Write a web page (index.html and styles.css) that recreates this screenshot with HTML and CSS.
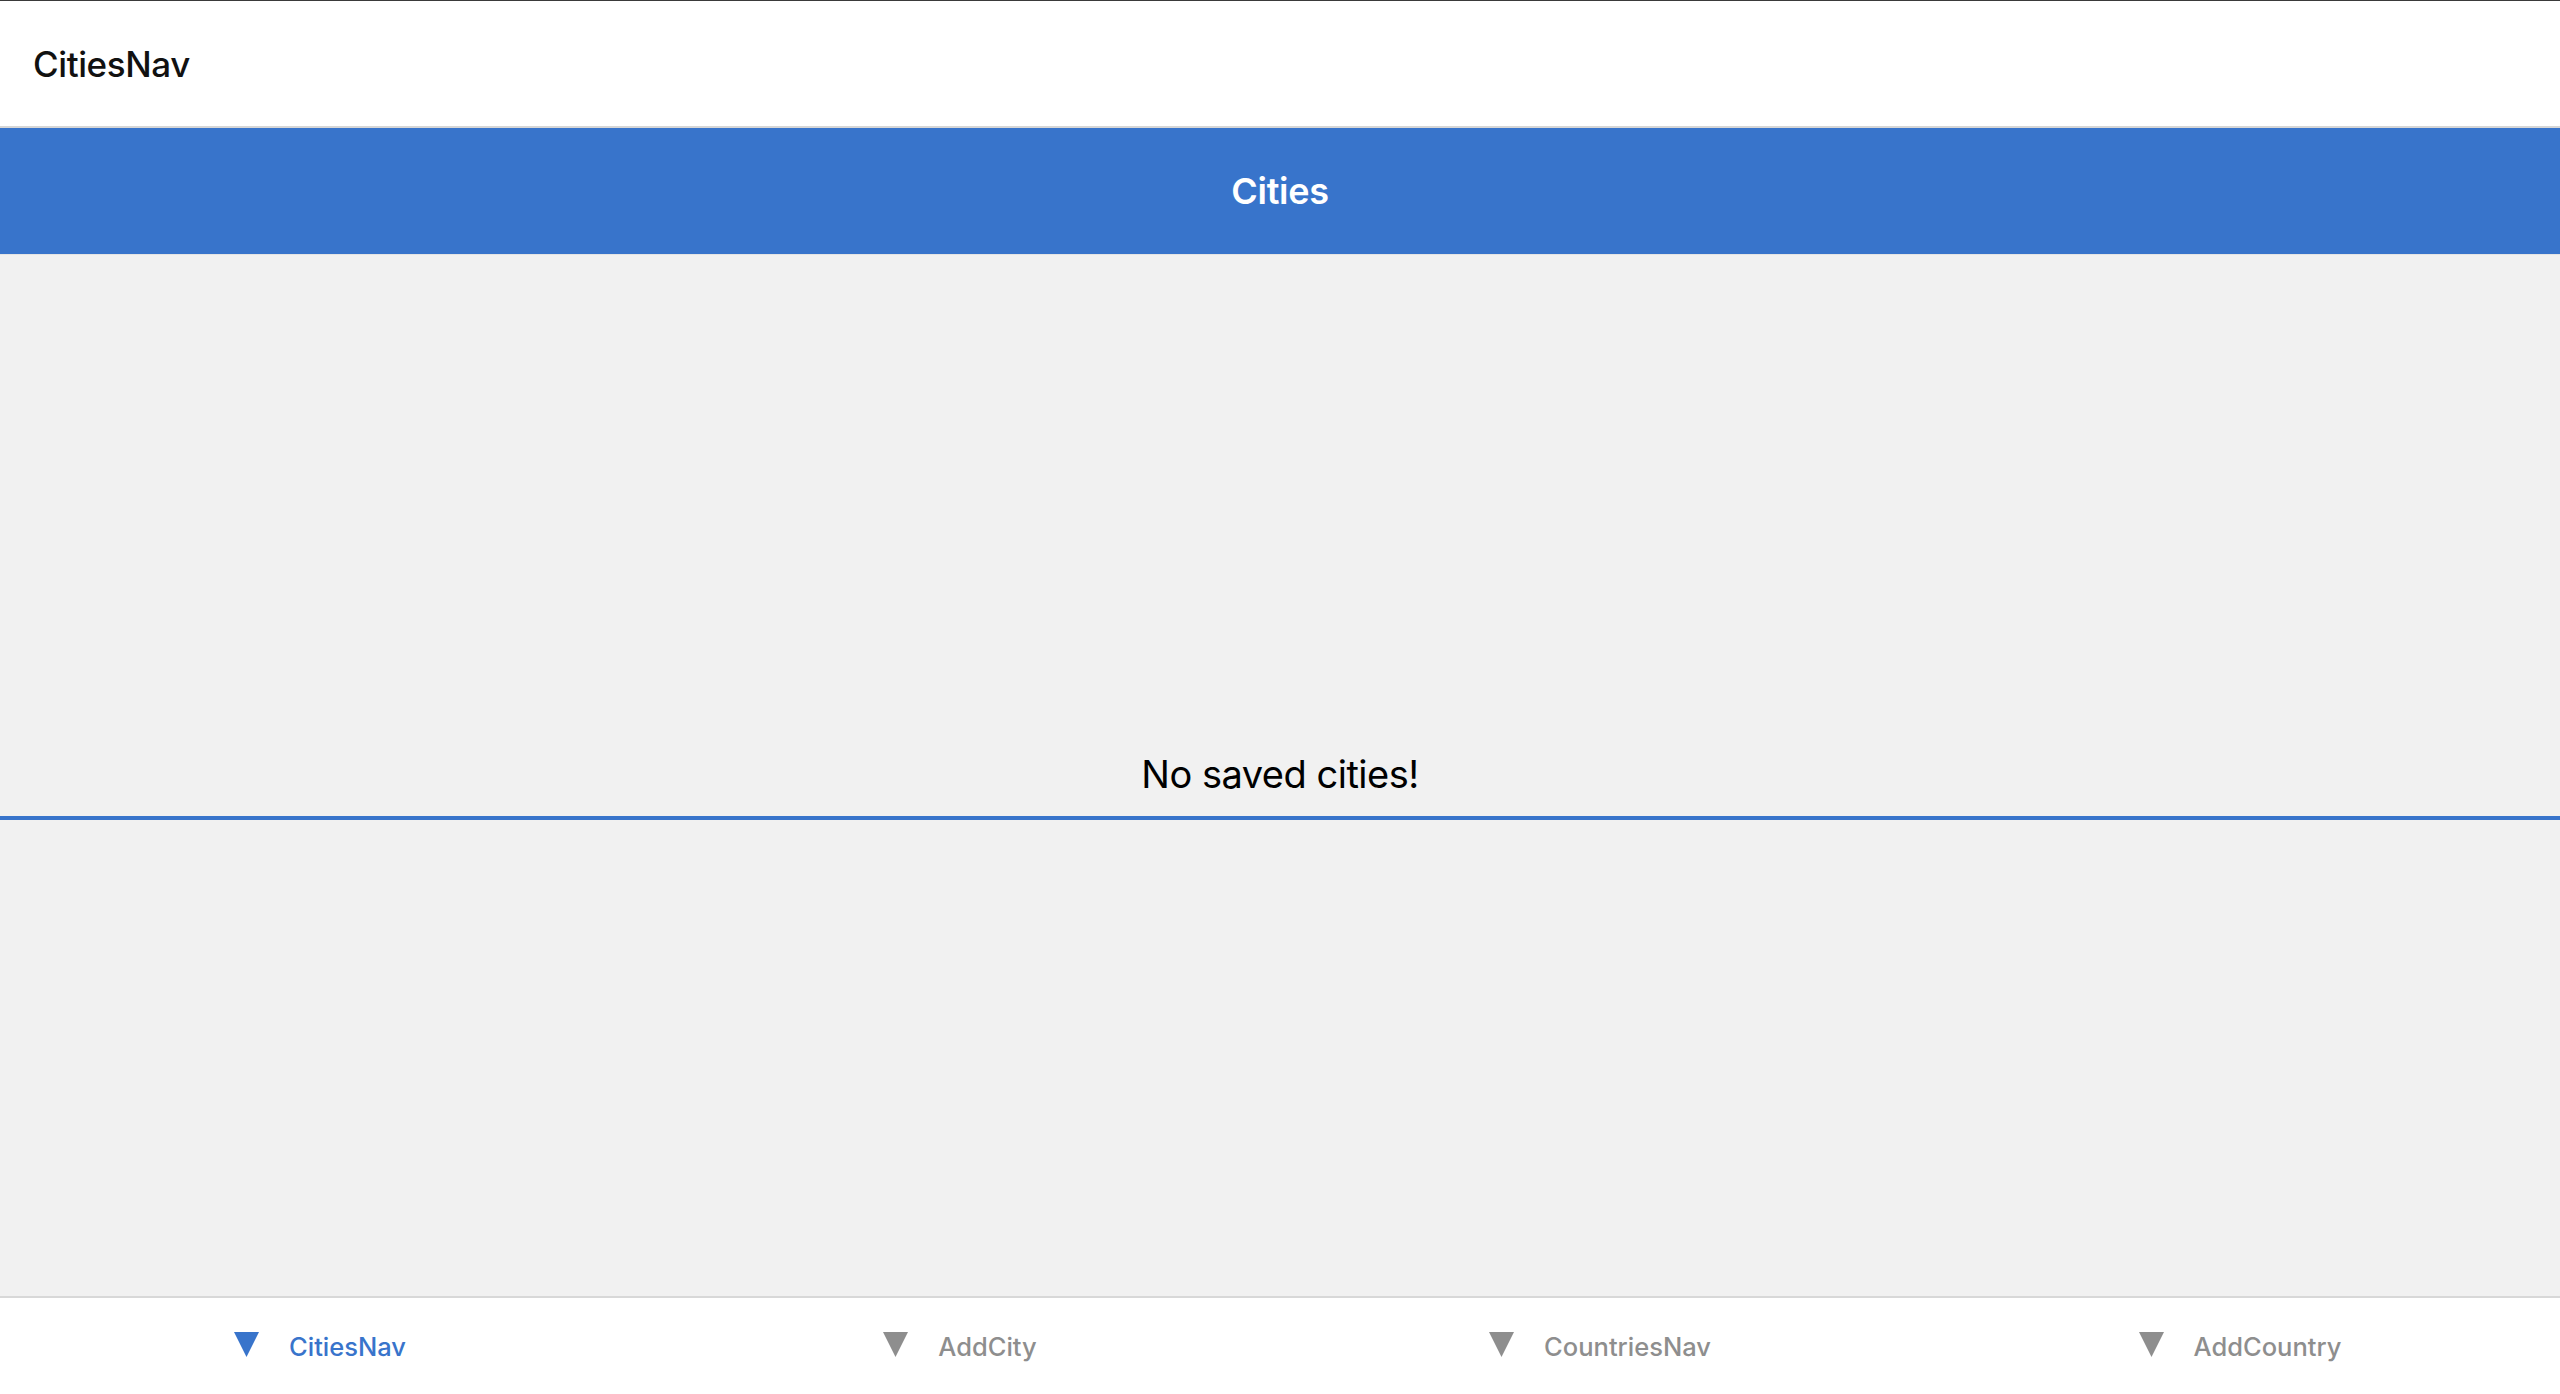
FILE: index.html
```html
<!DOCTYPE html>
<html>
<head>
<meta charset="utf-8">
<link rel="stylesheet" href="styles.css">
</head>
<body>
<div class="app">
  <header class="topbar">
    <div class="topbar-title">CitiesNav</div>
  </header>
  <div class="navbar">
    <div class="navbar-title">Cities</div>
  </div>
  <main class="content">
    <div class="empty">No saved cities!</div>
  </main>
  <nav class="tabbar">
    <div class="tab active">
      <svg class="tab-icon" viewBox="0 0 25 25"><polygon points="0,0 25,0 12.5,25"/></svg>
      <span class="tab-label">CitiesNav</span>
    </div>
    <div class="tab">
      <svg class="tab-icon" viewBox="0 0 25 25"><polygon points="0,0 25,0 12.5,25"/></svg>
      <span class="tab-label">AddCity</span>
    </div>
    <div class="tab">
      <svg class="tab-icon" viewBox="0 0 25 25"><polygon points="0,0 25,0 12.5,25"/></svg>
      <span class="tab-label">CountriesNav</span>
    </div>
    <div class="tab">
      <svg class="tab-icon" viewBox="0 0 25 25"><polygon points="0,0 25,0 12.5,25"/></svg>
      <span class="tab-label">AddCountry</span>
    </div>
  </nav>
</div>
</body>
</html>
```
FILE: styles.css
```css
html, body {
  margin: 0;
  padding: 0;
  height: 100%;
}
body {
  font-family: Inter, "Noto Sans", "Liberation Sans", sans-serif;
  background: #ffffff;
}
.app {
  display: flex;
  flex-direction: column;
  height: 100vh;
  border-top: 1px solid #3a3a3a;
  box-sizing: border-box;
}
.topbar {
  height: 125px;
  flex: 0 0 auto;
  display: flex;
  align-items: center;
  padding-left: 33px;
  background: #ffffff;
  border-bottom: 2px solid #d6d6d6;
}
.topbar-title {
  font-size: 35px;
  font-weight: 500;
  color: #111111;
  letter-spacing: -0.4px;
}
.navbar {
  height: 126px;
  flex: 0 0 auto;
  background: #3874cb;
  display: flex;
  align-items: center;
  justify-content: center;
  border-bottom: 1px solid #e4e4e4;
}
.navbar-title {
  color: #ffffff;
  font-size: 36px;
  font-weight: 600;
  letter-spacing: -0.3px;
}
.content {
  flex: 1 1 auto;
  background: #f1f1f1;
  display: flex;
  flex-direction: column;
  justify-content: center;
}
.empty {
  text-align: center;
  font-size: 38px;
  line-height: 46px;
  color: #000000;
  padding: 19px 0;
  border-bottom: 4px solid #3874cb;
  letter-spacing: -0.5px;
}
.tabbar {
  height: 96px;
  flex: 0 0 auto;
  display: grid;
  grid-template-columns: repeat(4, 1fr);
  border-top: 2px solid #d8d8d8;
  background: #ffffff;
}
.tab {
  display: flex;
  align-items: center;
  justify-content: center;
  gap: 30px;
  color: #8e8e8e;
  fill: #8e8e8e;
}
.tab.active {
  color: #3874cb;
  fill: #3874cb;
}
.tab-icon {
  flex: 0 0 25px;
  width: 25px;
  height: 25px;
  margin-top: -4px;
}
.tab-label {
  font-size: 25.5px;
  font-weight: 500;
  letter-spacing: 0;
}
```
